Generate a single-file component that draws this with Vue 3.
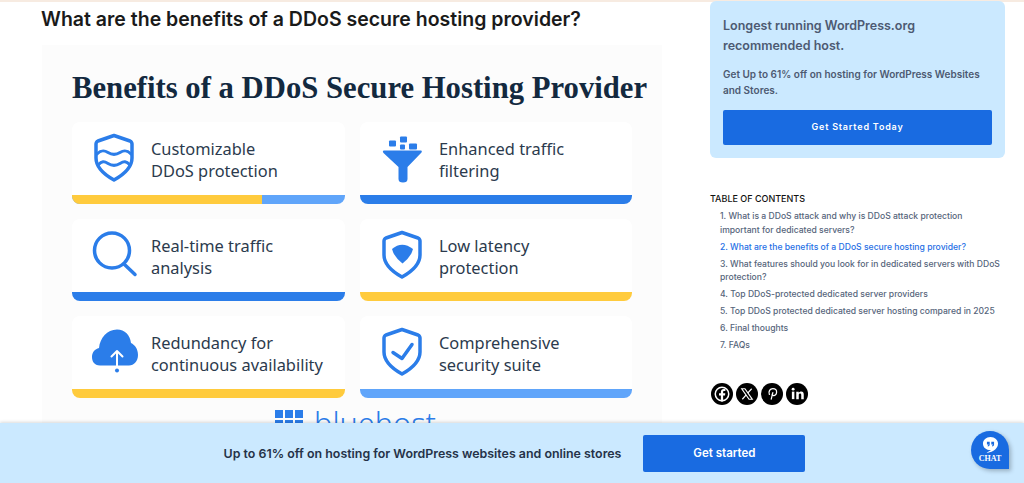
<script setup>
const cards = [
  { id: 'shield-wave', lines: ['Customizable', 'DDoS protection'], bar: 'split' },
  { id: 'funnel', lines: ['Enhanced traffic', 'filtering'], bar: 'blue' },
  { id: 'search', lines: ['Real-time traffic', 'analysis'], bar: 'blue' },
  { id: 'shield-solid', lines: ['Low latency', 'protection'], bar: 'yellow' },
  { id: 'cloud', lines: ['Redundancy for', 'continuous availability'], bar: 'yellow' },
  { id: 'shield-check', lines: ['Comprehensive', 'security suite'], bar: 'light' },
];

const toc = [
  { text: '1. What is a DDoS attack and why is DDoS attack protection important for dedicated servers?' },
  { text: '2. What are the benefits of a DDoS secure hosting provider?', active: true },
  { text: '3. What features should you look for in dedicated servers with DDoS protection?' },
  { text: '4. Top DDoS-protected dedicated server providers' },
  { text: '5. Top DDoS protected dedicated server hosting compared in 2025' },
  { text: '6. Final thoughts' },
  { text: '7. FAQs' },
];

const shieldPath = 'M20 0.5 L36 6 Q38 7 38 9 V23 C38 33 29 40 20 45 C11 40 2 33 2 23 V9 Q2 7 4 6 Z';
</script>

<template>
  <div class="page">
    <div class="top-line"></div>
    <div class="columns">
      <main class="article">
        <h2 class="heading">What are the benefits of a DDoS secure hosting provider?</h2>
        <div class="figure">
          <div class="figure-title">Benefits of a DDoS Secure Hosting Provider</div>
          <div class="card-grid">
            <div v-for="card in cards" :key="card.id" class="card">
              <div class="card-body">
                <svg class="card-icon" viewBox="0 0 40 48" fill="none" stroke="#2b7de9" stroke-width="3.5" stroke-linecap="round" stroke-linejoin="round">
                  <template v-if="card.id === 'shield-wave'">
                    <path :d="shieldPath" />
                    <path d="M3 19 C7 15 10 15 14 17.5 C18 20 22 20 26 17.5 C30 15 33 15 37 19" stroke-width="3" />
                    <path d="M4 30 C8 26 10 26 14 28.5 C18 31 22 31 26 28.5 C30 26 32 26 36 30" stroke-width="3" />
                  </template>
                  <template v-else-if="card.id === 'funnel'">
                    <g fill="#2b7de9" stroke="none">
                      <rect x="7" y="5.5" width="7" height="6" rx="1" />
                      <rect x="18" y="1.5" width="7" height="6" rx="1" />
                      <rect x="18" y="9.5" width="5" height="5" rx="1" />
                      <rect x="27" y="8.5" width="8" height="6" rx="1" />
                      <path d="M2 15.5 H39 Q40.5 15.5 39.5 17.5 L25.5 32 V44 Q25.5 47.5 21 47.5 Q16.5 47.5 16.5 44 V32 L1.5 18 Q0 15.5 2 15.5 Z" />
                    </g>
                  </template>
                  <template v-else-if="card.id === 'search'">
                    <circle cx="18" cy="18.5" r="17.5" />
                    <path d="M30 32 L41 42.5" />
                  </template>
                  <template v-else-if="card.id === 'shield-solid'">
                    <path :d="shieldPath" />
                    <path d="M10 17 Q20 8.5 31 17 Q29 25 20.5 31.5 Q12 25 10 17 Z" fill="#2b7de9" stroke="none" />
                  </template>
                  <template v-else-if="card.id === 'cloud'">
                    <path d="M6 36.5 C0 36.5 -2 32 -2 28 C-2 23 1 20 5 19 C6 9 13 0.5 23 0.5 C31 0.5 36 6 37 14 C41 16 44 20 44 26 C44 32 40 36.5 35 36.5 Z" fill="#2b7de9" stroke="none" />
                    <path d="M23 22 V36.5 M17.5 27.5 L23 22 L28.5 27.5" stroke="#fff" stroke-width="2" />
                    <circle cx="23" cy="41.5" r="2" fill="#2b7de9" stroke="none" />
                  </template>
                  <template v-else>
                    <path :d="shieldPath" />
                    <path d="M11 23.5 L20 29.5 L30 15.5" />
                  </template>
                </svg>
                <div class="card-text">
                  <div v-for="line in card.lines" :key="line">{{ line }}</div>
                </div>
              </div>
              <div class="card-bar" :class="card.bar">
                <span v-if="card.bar === 'split'" class="bar-yellow"></span>
              </div>
            </div>
          </div>
          <div class="logo">
            <div class="logo-grid"><span v-for="n in 6" :key="n"></span></div>
            <span class="logo-word">bluehost</span>
          </div>
        </div>
      </main>

      <aside class="sidebar">
        <div class="promo">
          <div class="promo-title">Longest running WordPress.org recommended host.</div>
          <div class="promo-text">Get Up to 61% off on hosting for WordPress Websites and Stores.</div>
          <a class="promo-btn">Get Started Today</a>
        </div>

        <div class="toc">
          <div class="toc-title">TABLE OF CONTENTS</div>
          <div v-for="item in toc" :key="item.text" class="toc-item" :class="{ active: item.active }">{{ item.text }}</div>
        </div>

        <div class="social">
          <a class="social-btn">
            <svg viewBox="0 0 24 24" width="18" height="18"><circle cx="12" cy="12" r="9" fill="none" stroke="#fff" stroke-width="2" /><path d="M13.5 22 V14 H16 L16.4 11 H13.5 V9.4 C13.5 8.5 13.9 8 15 8 H16.5 V5.4 C15.8 5.3 15 5.2 14.3 5.2 C12 5.2 10.5 6.6 10.5 9 V11 H8 V14 H10.5 V22 Z" fill="#fff" /></svg>
          </a>
          <a class="social-btn">
            <svg viewBox="0 0 24 24" width="14" height="14"><path d="M3 3 H8.5 L21 21 H15.5 Z" fill="none" stroke="#fff" stroke-width="2" /><path d="M20 3 L13.2 10.6 M10.6 13.6 L4 21" stroke="#fff" stroke-width="2" /></svg>
          </a>
          <a class="social-btn">
            <svg viewBox="0 0 24 24" width="15" height="15"><path d="M10 21 L12.5 10.5 M7 13.5 C5 9 8 4 12.5 4 C17 4 19 7 18.5 10.5 C18 14 15.5 16 13 15 C12 14.6 11.5 14 11.3 13.4" fill="none" stroke="#fff" stroke-width="2" stroke-linecap="round" /></svg>
          </a>
          <a class="social-btn">
            <svg viewBox="0 0 24 24" width="15" height="15" fill="#fff"><rect x="3" y="9" width="4" height="12" /><circle cx="5" cy="5" r="2.3" /><path d="M10 9 H14 V11 C14.8 9.6 16.2 8.7 18 8.7 C20.8 8.7 22 10.6 22 13.6 V21 H18 V14.5 C18 13 17.4 12.1 16.1 12.1 C14.8 12.1 14 13 14 14.5 V21 H10 Z" /></svg>
          </a>
        </div>
      </aside>
    </div>

    <div class="sticky-bar">
      <span class="sticky-text">Up to 61% off on hosting for WordPress websites and online stores</span>
      <a class="sticky-btn">Get started</a>
    </div>

    <div class="chat">
      <svg viewBox="0 0 24 24" width="19" height="19"><path d="M12 2.5 C6.5 2.5 2.5 6.2 2.5 11 C2.5 15.8 6.5 19 12 19 C12.3 19 12.5 19 12.8 19 L7 22.5 C11 22.5 21.5 19 21.5 11 C21.5 6.2 17.5 2.5 12 2.5 Z" fill="#fff" /><path d="M7.5 8.5 H11 V12 C11 13.5 10 14.5 8.5 14.6 V13.2 C9.2 13 9.5 12.7 9.6 12 H7.5 Z M13 8.5 H16.5 V12 C16.5 13.5 15.5 14.5 14 14.6 V13.2 C14.7 13 15 12.7 15.1 12 H13 Z" fill="#1a6be0" /></svg>
      <span class="chat-label">CHAT</span>
    </div>
  </div>
</template>

<style>
html, body {
  margin: 0;
  background: #fff;
}
</style>

<style scoped>
.page {
  position: relative;
  width: 1024px;
  height: 483px;
  overflow: hidden;
  background: #fff;
  font-family: Inter, "Liberation Sans", sans-serif;
}

.top-line {
  height: 2px;
  background: #f7ebe1;
}

.columns {
  display: flex;
}

.article {
  width: 620px;
  margin-left: 42px;
}

.heading {
  margin: 5px 0 0 -1px;
  font-size: 19.5px;
  line-height: 24px;
  font-weight: 600;
  color: #1a1a1a;
  white-space: nowrap;
}

.figure {
  margin-top: 14px;
  padding: 24px 30px 0;
  height: 400px;
  box-sizing: border-box;
  background: #fcfcfc;
}

.figure-title {
  font-family: "Liberation Serif", serif;
  font-size: 30.7px;
  line-height: 38px;
  font-weight: 700;
  color: #13293f;
  white-space: nowrap;
}

.card-grid {
  display: grid;
  grid-template-columns: 273px 272px;
  column-gap: 15px;
  row-gap: 15px;
  margin-top: 15px;
}

.card {
  height: 82px;
  display: flex;
  flex-direction: column;
  background: #fff;
  border-radius: 8px;
  overflow: hidden;
}

.card-body {
  flex: 1;
  display: flex;
  align-items: center;
  padding-left: 22px;
}

.card-icon {
  width: 40px;
  height: 48px;
  flex: none;
  overflow: visible;
}

.card-text {
  margin-left: 17px;
  padding-top: 3px;
  font-family: "Noto Sans", sans-serif;
  font-size: 16.4px;
  line-height: 22px;
  color: #2b3a4d;
  white-space: nowrap;
}

.card-bar {
  height: 9px;
  flex: none;
}

.bar-yellow {
  display: block;
  width: 190px;
  height: 100%;
  background: #ffcb3d;
}

.card-bar.split,
.card-bar.light {
  background: #60a5fa;
}

.card-bar.blue {
  background: #2b7de9;
}

.card-bar.yellow {
  background: #ffcb3d;
}

.logo {
  display: flex;
  align-items: flex-start;
  gap: 11px;
  margin: 10px 0 0 203px;
}

.logo-grid {
  display: grid;
  grid-template-columns: repeat(3, 8px);
  grid-auto-rows: 8px;
  gap: 2px;
  margin-top: 2px;
}

.logo-grid span {
  background: #2b7de9;
}

.logo-word {
  font-family: "Noto Sans", sans-serif;
  font-size: 30.7px;
  line-height: 30px;
  font-weight: 300;
  color: #2b7de9;
}

.sidebar {
  width: 295px;
  margin-left: 48px;
  margin-top: -1px;
}

.promo {
  height: 157px;
  box-sizing: border-box;
  padding: 15px 13px 0;
  background: #cbe9ff;
  border-radius: 6px;
  color: #4d5a72;
}

.promo-title {
  font-size: 12.5px;
  line-height: 20px;
  font-weight: 600;
}

.promo-text {
  margin-top: 10px;
  font-size: 10px;
  line-height: 16px;
  font-weight: 600;
}

.promo-btn {
  display: block;
  margin-top: 12px;
  height: 35px;
  line-height: 34px;
  text-align: center;
  background: #196be1;
  border-radius: 2px;
  color: #fff;
  font-size: 9px;
  font-weight: 600;
  letter-spacing: 0.8px;
}

.toc {
  margin-top: 34px;
}

.toc-title {
  font-size: 9px;
  line-height: 14px;
  font-weight: 500;
  color: #111;
  margin-bottom: 4px;
}

.toc-item {
  margin: 0 4px 3.5px 10px;
  font-size: 8.6px;
  line-height: 13.5px;
  color: #56657b;
  font-weight: 500;
}

.toc-item.active {
  color: #1f6fe5;
}

.social {
  display: flex;
  gap: 3px;
  margin: 30px 0 0 1px;
}

.social-btn {
  width: 22px;
  height: 22px;
  border-radius: 50%;
  background: #000;
  display: flex;
  align-items: center;
  justify-content: center;
}

.sticky-bar {
  position: absolute;
  left: 0;
  right: 0;
  bottom: 0;
  height: 60px;
  display: flex;
  align-items: center;
  justify-content: center;
  gap: 22px;
  padding-left: 5px;
  box-sizing: border-box;
  background: #cbe9ff;
  box-shadow: 0 -1px 3px rgba(0, 0, 0, 0.15);
}

.sticky-text {
  font-size: 12.4px;
  font-weight: 600;
  color: #253248;
}

.sticky-btn {
  width: 162px;
  height: 37px;
  line-height: 37px;
  text-align: center;
  background: #196be1;
  border-radius: 2px;
  color: #fff;
  font-size: 11.5px;
  font-weight: 600;
}

.chat {
  position: absolute;
  left: 971px;
  top: 431px;
  width: 38px;
  height: 38px;
  display: flex;
  flex-direction: column;
  align-items: center;
  padding-top: 4px;
  box-sizing: border-box;
  background: #196be1;
  border-radius: 50% 50% 0 50%;
  box-shadow: 2px 2px 4px rgba(0, 0, 0, 0.25);
}

.chat-label {
  font-family: "Liberation Serif", serif;
  font-size: 8px;
  line-height: 9px;
  font-weight: 700;
  color: #fff;
}
</style>
